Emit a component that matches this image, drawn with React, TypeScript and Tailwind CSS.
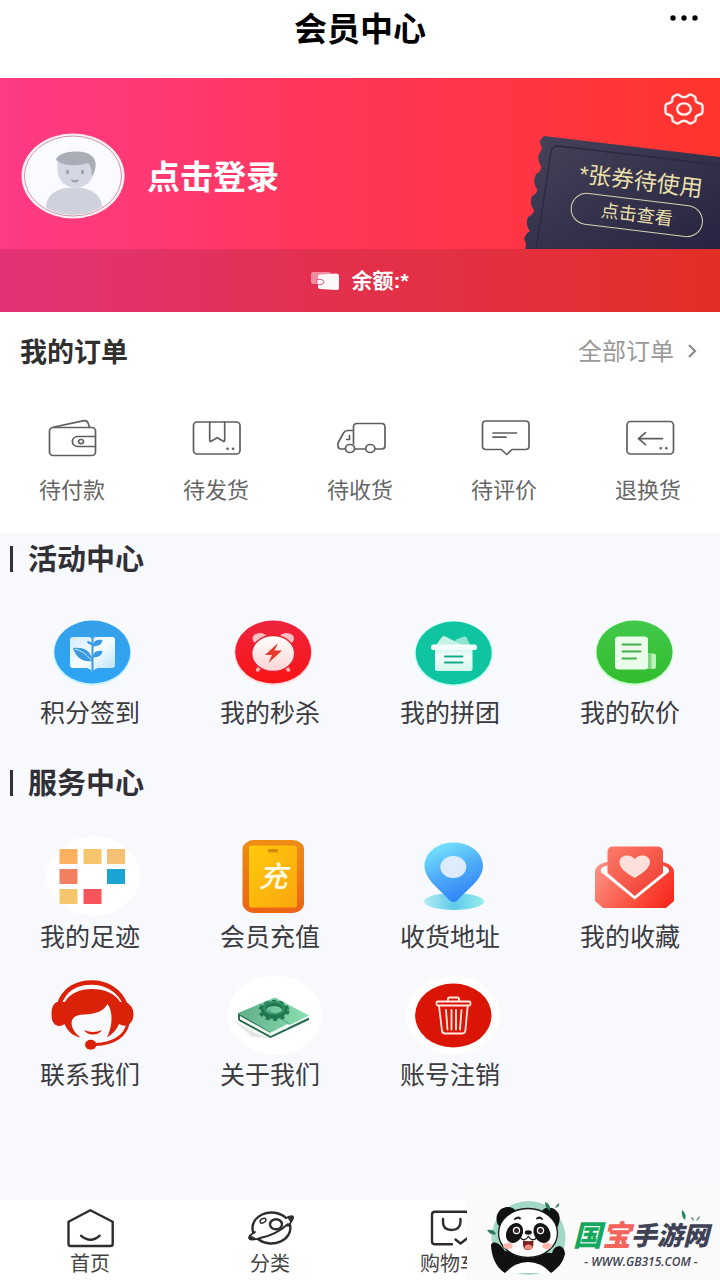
import React from 'react';

interface MenuItem {
  label: string;
  icon: React.ReactNode;
}

const iconFont = '"Liberation Sans", "Noto Sans CJK SC", sans-serif';

const Avatar = () => (
  <svg className="w-[104px] h-[86px] shrink-0" viewBox="0 0 104 86" aria-hidden="true">
    <defs>
      <clipPath id="avatarClip"><ellipse cx="52" cy="43" rx="47" ry="39" /></clipPath>
    </defs>
    <ellipse cx="52" cy="43" rx="51.5" ry="42.5" fill="#fdf1f5" />
    <ellipse cx="52" cy="43" rx="48.5" ry="40" fill="#fafbfe" stroke="#c9788f" strokeWidth="0.8" />
    <g clipPath="url(#avatarClip)">
      <path d="M25 86V72C27 61 36 56 46 55H60C71 56 79 62 81 72V86Z" fill="#cfd1dc" />
      <path d="M36.500 29H73V37C72 48 64 55 54.500 55S37 48 36.500 37Z" fill="#d5d8e4" />
      <path d="M35 27C36 21 46 18.500 56 18.500C68 18.500 76 24 74.500 34C74 39 72 42 70.500 43C71 38 70 33 67 30C58 33 43 34 35 27Z" fill="#a9adb5" />
      <ellipse cx="46.500" cy="39" rx="1.500" ry="2.200" fill="#9a9fae" />
      <ellipse cx="61.500" cy="39" rx="1.500" ry="2.200" fill="#9a9fae" />
      <path d="M49.500 46.500Q54 48 58 46.500Q57 49.500 54 49.500T49.500 46.500Z" fill="#979cab" />
    </g>
  </svg>
);

const GearIcon = () => (
  <svg className="w-10 h-8" viewBox="0 0 40 32" fill="none" stroke="#fff0ee" strokeWidth="2.400" strokeLinejoin="round" aria-hidden="true">
    <path d="M12 2Q14 1 15.500 2.300C17.500 4 18.500 4.300 20 4.300S22.500 4 24.500 2.300Q26 1 28 2L30.500 3.500Q31.800 4.500 31.600 6C31.400 8.500 32.500 9.800 36 10.500Q38.500 11 38.500 13.500V18.500Q38.500 21 36 21.500C32.500 22.200 31.400 23.500 31.600 26Q31.800 27.500 30.500 28.500L28 30Q26 31 24.500 29.700C22.500 28 21.500 27.700 20 27.700S17.500 28 15.500 29.700Q14 31 12 30L9.500 28.500Q8.200 27.500 8.400 26C8.600 23.500 7.500 22.200 4 21.500Q1.500 21 1.500 18.500V13.500Q1.500 11 4 10.500C7.500 9.800 8.600 8.500 8.400 6Q8.200 4.500 9.500 3.500Z" />
    <ellipse cx="20" cy="16" rx="6.800" ry="5.600" />
  </svg>
);

const TicketShape = () => (
  <svg className="absolute inset-0 w-full h-full" viewBox="0 0 197 114" aria-hidden="true">
    <defs>
      <linearGradient id="ticket" x1="0" y1="0" x2="1" y2="1">
        <stop offset="0" stopColor="#46435a" />
        <stop offset="1" stopColor="#25233f" />
      </linearGradient>
    </defs>
    <path d="M21 1L197 22V114H2Q4 109 1 104Q3 98 7 96Q2 90 5 82Q11 79 11 75Q6 69 9 61Q15 58 14 54Q9 47 13 39Q19 36 18 31Q13 24 17 17Q20 14 18 11Q15 5 21 1Z" fill="url(#ticket)" />
    <path d="M13 114L28 17Q29 11 35 11L197 30" fill="none" stroke="#2b2940" strokeWidth="1.300" />
  </svg>
);

const BalanceIcon = () => (
  <svg className="w-7 h-5" viewBox="0 0 28 20" aria-hidden="true">
    <path d="M2 1H18Q20 1 20 3V13H2Q0 13 0 11V3Q0 1 2 1Z" fill="#f58ba0" />
    <path d="M9 3.500L25 2.500Q28 2.500 28 5V17Q28 19 25 19L9 18Q7 18 7 16V5Q7 3.500 9 3.500Z" fill="#fff8f8" />
    <path d="M6 8.500H10Q13 9 13 11T10 13.500H6Z" fill="#fff8f8" stroke="#d7557b" strokeWidth="0.900" />
  </svg>
);

const OrderIcon = ({ children }: { children: React.ReactNode }) => (
  <svg className="w-14 h-11" viewBox="0 0 56 44" fill="none" stroke="#5f5f5f" strokeWidth="1.700" strokeLinecap="round" strokeLinejoin="round" aria-hidden="true">
    {children}
  </svg>
);

const orders: MenuItem[] = [
  {
    label: '待付款',
    icon: (
      <OrderIcon>
        <rect x="5.500" y="11.500" width="46" height="28" rx="3.500" />
        <path d="M10 11L39 4.800Q43 4 44.300 7.500L45.500 11.500M51.500 20.500H34C26.500 20.500 26.500 30.500 34 30.500H51.500" />
        <ellipse cx="37" cy="25.600" rx="2.500" ry="2.100" />
      </OrderIcon>
    )
  },
  {
    label: '待发货',
    icon: (
      <OrderIcon>
        <rect x="5.500" y="6" width="46.500" height="32" rx="3.500" />
        <path d="M21.700 6V24.500Q22 26 23.500 25L29.200 21.700L35 25Q36.500 26 36.700 24.500V6" />
        <path d="M39.500 32.700H39.600M45 32.700H45.100" strokeWidth="2.600" />
      </OrderIcon>
    )
  },
  {
    label: '待收货',
    icon: (
      <OrderIcon>
        <path d="M13.500 33H9Q6 33 6 30V27L11.500 17Q13 14.500 15.500 14.500H21.500M22.500 33H33.500M43 33H49.500Q53 33 53 30V11Q53 7.500 49.500 7.500H25Q21.500 7.500 21.500 11V28M17.500 19.500V23.500H14.500" />
        <ellipse cx="18" cy="32.500" rx="4.600" ry="4" />
        <ellipse cx="38.300" cy="32.500" rx="4.600" ry="4" />
      </OrderIcon>
    )
  },
  {
    label: '待评价',
    icon: (
      <OrderIcon>
        <path d="M10 5H49.500Q53 5 53 8.500V30Q53 33.500 49.500 33.500H36L30.700 38.500L25.300 33.500H10Q6.500 33.500 6.500 30V8.500Q6.500 5 10 5ZM17 17H40.500M17 21.200H30" />
      </OrderIcon>
    )
  },
  {
    label: '退换货',
    icon: (
      <OrderIcon>
        <rect x="7" y="5.500" width="46.500" height="32.500" rx="3.500" />
        <path d="M42.500 22.700H18.500M25.500 16.700L18.500 22.700L25.500 28.700" />
        <path d="M40.700 32.300H40.800M46.300 32.300H46.400" strokeWidth="2.600" />
      </OrderIcon>
    )
  }
];

const TileIcon = ({ children }: { children: React.ReactNode }) => (
  <svg className="w-24 h-20 overflow-visible" viewBox="0 0 96 80" aria-hidden="true">{children}</svg>
);

const activities: MenuItem[] = [
  {
    label: '积分签到',
    icon: (
      <TileIcon>
        <defs>
          <linearGradient id="blueDisc" x1="0" y1="0" x2="0" y2="1">
            <stop offset="0" stopColor="#35a0e8" /><stop offset="1" stopColor="#2ea4f5" />
          </linearGradient>
          <linearGradient id="page" x1="0" y1="0" x2="1" y2="1">
            <stop offset="0" stopColor="#d2ebfc" /><stop offset="0.500" stopColor="#f8fdff" /><stop offset="1" stopColor="#b9e0fb" />
          </linearGradient>
        </defs>
        <ellipse cx="50.300" cy="42" rx="39" ry="32.500" fill="#c9f3ff" />
        <ellipse cx="50.300" cy="41" rx="38" ry="31.500" fill="url(#blueDisc)" />
        <path d="M31 26H46Q50 26 50.500 29Q51 26 55 26H70Q73 26 73 29V54Q73 57 70 57H56Q53 57.500 50.500 60.500Q48 57.500 45 57H31Q28 57 28 54V29Q28 26 31 26Z" fill="url(#page)" />
        <g fill="#3b9be0">
          <path d="M49.500 27H51.500V60H49.500Z" />
          <path d="M31 37Q43 36 47.500 42Q50 45 50 50Q36 52 31 37Z" />
          <path d="M51 34Q52 28 60.500 29Q60 35 51 35.500ZM51 45Q52 39 60.500 40Q60 46 51 46.500Z" />
          <path d="M49.500 34Q45 33 45 30Q49 30 50.500 33Z" />
        </g>
        <path d="M33 38Q42 40 49 49" stroke="#d6effd" strokeWidth="0.900" fill="none" />
      </TileIcon>
    )
  },
  {
    label: '我的秒杀',
    icon: (
      <TileIcon>
        <defs>
          <linearGradient id="redDisc" x1="0" y1="0" x2="0" y2="1">
            <stop offset="0" stopColor="#ef2440" /><stop offset="1" stopColor="#f81414" />
          </linearGradient>
          <linearGradient id="clockFace" x1="0" y1="0" x2="0" y2="1">
            <stop offset="0" stopColor="#ffffff" /><stop offset="1" stopColor="#fcd4d4" />
          </linearGradient>
        </defs>
        <ellipse cx="51.200" cy="42" rx="39" ry="32.500" fill="#ffdcdf" />
        <ellipse cx="51.200" cy="41" rx="38" ry="31.500" fill="url(#redDisc)" />
        <ellipse cx="38" cy="27.500" rx="7.500" ry="5.500" fill="#fbc0c4" />
        <ellipse cx="64.500" cy="27.500" rx="7.500" ry="5.500" fill="#fbc0c4" />
        <path d="M39 55L35.500 59M63 55L66.500 59" stroke="#fbb4b4" strokeWidth="3.500" strokeLinecap="round" />
        <ellipse cx="51.200" cy="42.500" rx="21.500" ry="18" fill="url(#clockFace)" stroke="#e82231" strokeWidth="1.500" />
        <path d="M56 32L43 44H50L46.500 52L60 39.500H52.500Z" fill="#e83a2c" />
      </TileIcon>
    )
  },
  {
    label: '我的拼团',
    icon: (
      <TileIcon>
        <defs>
          <linearGradient id="parcel" x1="0" y1="0" x2="0" y2="1">
            <stop offset="0" stopColor="#c9f3e8" /><stop offset="0.350" stopColor="#f6fffc" /><stop offset="1" stopColor="#d2f7ec" />
          </linearGradient>
        </defs>
        <ellipse cx="51.700" cy="42.500" rx="39" ry="32.500" fill="#b9fff2" />
        <ellipse cx="51.700" cy="42" rx="38" ry="31.500" fill="#0fc4a0" />
        <path d="M53 29L62 25.500Q64 25 65 27L68 34H54Z" fill="#8fe3d0" />
        <path d="M34 34L40 26Q41.500 24.500 43.500 25.500L59 33.500V35H34Z" fill="#c6f2e6" />
        <path d="M33 37H70.500V57.500Q70.500 60 68 60H35.500Q33 60 33 57.500Z" fill="url(#parcel)" />
        <rect x="29" y="33.500" width="46" height="5.500" rx="2.500" fill="#f3fffb" />
        <path d="M43 45.500H60.500M43 51.500H60.500" stroke="#12ac87" strokeWidth="2" strokeLinecap="round" />
      </TileIcon>
    )
  },
  {
    label: '我的砍价',
    icon: (
      <TileIcon>
        <defs>
          <linearGradient id="greenDisc" x1="0" y1="0" x2="0" y2="1">
            <stop offset="0" stopColor="#43c84b" /><stop offset="1" stopColor="#31bd2e" />
          </linearGradient>
        </defs>
        <ellipse cx="52.500" cy="42" rx="39" ry="32.500" fill="#c8ffcc" />
        <ellipse cx="52.500" cy="41" rx="38" ry="31.500" fill="url(#greenDisc)" />
        <rect x="63" y="42.500" width="11" height="15.500" rx="2.500" fill="#bdf0bd" />
        <rect x="65.500" y="43" width="4" height="15" fill="#7fd582" />
        <rect x="33" y="25.500" width="33" height="33" rx="3.500" fill="#ecfcea" />
        <path d="M40.500 33.500H58.500M40.500 40.500H58.500M40.500 47.500H54" stroke="#45b04a" strokeWidth="2" strokeLinecap="round" />
      </TileIcon>
    )
  }
];

const services: MenuItem[] = [
  {
    label: '我的足迹',
    icon: (
      <TileIcon>
        <ellipse cx="51.300" cy="41" rx="47" ry="39.500" fill="#ffffff" />
        <rect x="17.500" y="14" width="18" height="15" fill="#fbb05d" />
        <rect x="41.500" y="14" width="18" height="15" fill="#f4c56c" />
        <rect x="65" y="14" width="18" height="15" fill="#f4c073" />
        <rect x="17.500" y="34" width="18" height="15" fill="#f08060" />
        <rect x="65" y="34" width="18" height="15" fill="#1ba4d2" />
        <rect x="17.500" y="54" width="18" height="15" fill="#f4c56c" />
        <rect x="41.500" y="54" width="18" height="15" fill="#f7545c" />
      </TileIcon>
    )
  },
  {
    label: '会员充值',
    icon: (
      <TileIcon>
        <defs>
          <linearGradient id="cardEdge" x1="0" y1="0" x2="0" y2="1">
            <stop offset="0" stopColor="#ee8d14" /><stop offset="1" stopColor="#ec6416" />
          </linearGradient>
          <linearGradient id="cardFace" x1="0" y1="0" x2="1" y2="1">
            <stop offset="0" stopColor="#ffca0c" /><stop offset="1" stopColor="#fba60d" />
          </linearGradient>
        </defs>
        <path d="M31 5H71Q75 5 79 8Q82 10 82 14V69Q82 72 79 75Q75 78 71 78H31Q27 78 24 75Q20.500 72 20.500 69V14Q20.500 10 24 8Q27 5 31 5Z" fill="url(#cardEdge)" />
        <rect x="27" y="10.500" width="48" height="62" rx="2.500" fill="url(#cardFace)" />
        <rect x="46" y="14" width="10" height="3.500" rx="1" fill="#d58a0b" />
        <text x="51" y="52" textAnchor="middle" fontSize="29" fontWeight="500" fontStyle="italic" fill="#fffbe9" style={{ fontFamily: iconFont }}>充</text>
      </TileIcon>
    )
  },
  {
    label: '收货地址',
    icon: (
      <TileIcon>
        <defs>
          <linearGradient id="pin" x1="0.200" y1="0" x2="0.600" y2="1">
            <stop offset="0" stopColor="#79e8fb" /><stop offset="0.500" stopColor="#4fadf7" /><stop offset="1" stopColor="#2f82f5" />
          </linearGradient>
          <linearGradient id="pinShade" x1="0" y1="0" x2="1" y2="0">
            <stop offset="0" stopColor="#b5eaf5" /><stop offset="0.500" stopColor="#5ecbea" /><stop offset="1" stopColor="#97eeec" />
          </linearGradient>
        </defs>
        <ellipse cx="52" cy="66.500" rx="30" ry="8.500" fill="url(#pinShade)" />
        <path d="M51.500 7.500C68 7.500 81 18 81 31C81 45 64 55 56 65Q51.500 69 47 65C39 55 22.500 45 22.500 31C22.500 18 35 7.500 51.500 7.500Z" fill="url(#pin)" />
        <ellipse cx="51.300" cy="32" rx="13" ry="11" fill="#dcecfc" />
      </TileIcon>
    )
  },
  {
    label: '我的收藏',
    icon: (
      <TileIcon>
        <defs>
          <linearGradient id="envelope" x1="0" y1="0.300" x2="1" y2="0.700">
            <stop offset="0" stopColor="#fb8d80" /><stop offset="0.600" stopColor="#fb503f" /><stop offset="1" stopColor="#f62a1f" />
          </linearGradient>
          <linearGradient id="letter" x1="0" y1="0" x2="1" y2="1">
            <stop offset="0" stopColor="#fb7b6a" /><stop offset="1" stopColor="#f03a2e" />
          </linearGradient>
        </defs>
        <path d="M24 27Q13 30 13 37V66L21 73H84L92 66V37Q92 30 81 27Z" fill="url(#envelope)" />
        <path d="M27 30Q17 32 19 37L52.700 64.500L87 37Q88 32 79 30Z" fill="#ffffff" />
        <path d="M31 11.500H75Q81 11.500 81 17V38L52.700 61L25.500 38V17Q25.500 11.500 31 11.500Z" fill="url(#letter)" />
        <path d="M52.700 43C44 38 37.500 33 37.500 27C37.500 20 47.500 18 52.700 24C58 18 68 20 68 27C68 33 61 38 52.700 43Z" fill="#fde0dc" />
      </TileIcon>
    )
  },
  {
    label: '联系我们',
    icon: (
      <TileIcon>
        <g fill="none" stroke="#d92208">
          <path d="M17 32C22 16 35 9.500 49.500 9.500S78 17 83.500 32" strokeWidth="4.600" />
          <path d="M86 50C84 62 73 71 53 71.500" strokeWidth="3" />
        </g>
        <path d="M23 29H15Q9.500 31 9.500 41T15 52.500Q19 54 22.500 51C25 57 30 63 38.500 64.500C33 60 30 56 29.500 50C30 44 34 42 42 41.500C53 41 61 39 65.500 31C71 38 71 52 65 64.500C71 61 75 56 77 51Q82 54 86 52Q91.500 49 91.500 41T84 29H78C73 20 62 16 50 16S28 20 23 29Z" fill="#d92208" />
        <path d="M42 57Q51 61 60 57Q57 61.500 51 61.500T42 57Z" fill="#d92208" />
        <ellipse cx="48.700" cy="71.700" rx="5.700" ry="5" fill="#d92208" />
      </TileIcon>
    )
  },
  {
    label: '关于我们',
    icon: (
      <TileIcon>
        <defs>
          <linearGradient id="cover" x1="0" y1="0" x2="1" y2="0">
            <stop offset="0" stopColor="#5fae8a" /><stop offset="1" stopColor="#8be0b0" />
          </linearGradient>
        </defs>
        <ellipse cx="53" cy="42" rx="47" ry="39.500" fill="#fefffe" />
        <path d="M11 47L36 61L48 65L30 64Z" fill="#e3e8e4" />
        <path d="M16 40L48.500 58V65L16 47Z" fill="#2f7257" />
        <path d="M18 43L48.500 60L64 53Q65 49 67 53L86 44.500V47L49 64L18 46.500Z" fill="#f1f8f2" />
        <path d="M17 48L48.700 65L87 47V44.500L67 54Q64 56 62 56.500L48.700 63L17 46Z" fill="#2b6e53" />
        <path d="M16 40L35 32L53 24.500L87 42.500L68 52Q65 50 62 53L48.700 59.500Z" fill="url(#cover)" />
        <path d="M37 31L67 51" stroke="#4c9c77" strokeWidth="1" />
        <ellipse cx="52" cy="37" rx="10.500" ry="6.500" fill="none" stroke="#1e7750" strokeWidth="5" />
        <ellipse cx="52" cy="37.500" rx="14" ry="9" fill="none" stroke="#1e7750" strokeWidth="3" strokeDasharray="4 3.500" />
        <ellipse cx="52" cy="35" rx="10" ry="6" fill="none" stroke="#399569" strokeWidth="1.500" />
      </TileIcon>
    )
  },
  {
    label: '账号注销',
    icon: (
      <TileIcon>
        <ellipse cx="51.300" cy="42" rx="47" ry="39.500" fill="#fffefd" />
        <ellipse cx="51.300" cy="42.500" rx="38.200" ry="32" fill="#da1505" />
        <g fill="none" stroke="#ffe9e3" strokeWidth="1.800" strokeLinejoin="round" strokeLinecap="round">
          <rect x="34.500" y="28.500" width="34" height="4" rx="1.500" />
          <path d="M46 28V26Q46 24.500 48 24.500H55Q57 24.500 57 26V28M37 33L40 58Q40.500 60.500 43 60.500H60Q63 60.500 63.300 58L65.700 33M44 37L45.500 56.500M49.500 37V56.500M54 37V56.500M59.500 37L58 56.500" />
        </g>
      </TileIcon>
    )
  }
];

const TabIcon = ({ children }: { children: React.ReactNode }) => (
  <svg className="w-[52px] h-10" viewBox="0 0 52 40" fill="none" stroke="#2d2d2d" strokeWidth="2.400" strokeLinecap="round" strokeLinejoin="round" aria-hidden="true">
    {children}
  </svg>
);

const tabs: MenuItem[] = [
  {
    label: '首页',
    icon: (
      <TabIcon>
        <path d="M4.500 13.800L26.300 2.300L48.700 13.800V36Q48.700 38 46.500 38H6.700Q4.500 38 4.500 36ZM17 27.700Q26.500 36 35.700 27.700" />
      </TabIcon>
    )
  },
  {
    label: '分类',
    icon: (
      <TabIcon>
        <path d="M9.500 25A19 15.500 0 0 1 42 10M46 17A19 15.500 0 0 1 14 31" />
        <path d="M42 10Q48 7 49 9T44 18M11 24Q4 28 5.500 30.500T16 30Q32 27 44 16" strokeWidth="1.800" />
        <path d="M44 9L49 8.500L47 14ZM5.500 27.500L5 31L12 31Z" fill="#2d2d2d" strokeWidth="1" />
        <ellipse cx="32" cy="16.300" rx="6" ry="5" />
        <ellipse cx="19" cy="12.700" rx="3.200" ry="2" transform="rotate(-30 19 12.700)" strokeWidth="1.400" />
      </TabIcon>
    )
  },
  {
    label: '购物车',
    icon: (
      <TabIcon>
        <path d="M28 36.300H11Q8 36.300 8 33.500V6.500Q8 3.800 11 3.800H42Q45 3.800 45 6.500V27M19 11V14Q19 22 27.500 22T36.500 14V11M31.500 31.500L36.500 35.500L43 30.500" />
      </TabIcon>
    )
  }
];

const PandaLogo = () => (
  <svg className="w-[88px] h-20 shrink-0" viewBox="0 0 88 80" aria-hidden="true">
    <circle cx="43.500" cy="40" r="37" fill="#a3d8c4" />
    <path d="M13 27C9 18 14 9 23 9Q28 9 31 13L17 30ZM57 13Q60 8 67 10C75 13 77 21 72 30Z" fill="#111" />
    <path d="M6 48Q6 44 10 44.500Q16 46 20 53L67 55Q69 48 75 48Q80 50 80 56C78 65 72 71 66 75H20C12 70 7 61 6 48Z" fill="#111" />
    <path d="M20 75Q30 64 43 64T66 75Z" fill="#fff" />
    <ellipse cx="43" cy="35" rx="29.500" ry="24.500" fill="#fff" stroke="#161616" strokeWidth="1.300" />
    <ellipse cx="29.500" cy="35" rx="8" ry="10.500" transform="rotate(28 29.500 35)" fill="#141414" />
    <ellipse cx="57" cy="35" rx="8" ry="10.500" transform="rotate(-28 57 35)" fill="#141414" />
    <circle cx="31.500" cy="32.500" r="3.700" fill="#fff" /><circle cx="31.500" cy="32.500" r="2.500" fill="#382a28" />
    <circle cx="55.500" cy="32.500" r="3.700" fill="#fff" /><circle cx="55.500" cy="32.500" r="2.500" fill="#382a28" />
    <path d="M30 21Q33 18.500 35 20.500M52 20.500Q55 18.500 57 21" stroke="#222" strokeWidth="2" strokeLinecap="round" fill="none" />
    <ellipse cx="43.300" cy="34.500" rx="3.500" ry="2.200" fill="#161616" />
    <path d="M35.500 40Q40 44 43.300 38.500Q47 44 51.500 40" stroke="#161616" strokeWidth="1.200" fill="none" />
    <path d="M38 42.500Q43 44 48.500 42.500Q49 52 43 52T38 42.500Z" fill="#7c2020" />
    <ellipse cx="43.300" cy="49" rx="3.600" ry="2.600" fill="#f58b82" />
    <ellipse cx="23" cy="48" rx="4.800" ry="3" fill="#fbb5ad" />
    <ellipse cx="62" cy="48" rx="4.800" ry="3" fill="#fbb5ad" />
    <path d="M60 4Q66 6 65 13Q60 10 60 4ZM70 10Q71 7 74 5Q75 9 70 10ZM2 32Q9 31 11 36Q6 38 2 32Z" fill="#2b7d5c" />
  </svg>
);

const SiteBadge = () => (
  <a href="#site" className="fixed right-0 bottom-0 z-10 flex h-24 w-[253px] items-end bg-[#fafafa] pb-0.5 pl-[18px]">
    <PandaLogo />
    <span className="relative flex flex-col items-center pb-2 italic">
      <span className="flex items-center whitespace-nowrap text-[26px] leading-9 font-black text-[#3f4254]">
        <span className="text-[29px] text-[#14a85e]">国</span>
        <span className="text-[29px] text-[#f4645c]">宝</span>
        手游网
      </span>
      <span className="whitespace-nowrap font-['Open_Sans',sans-serif] text-xs leading-4 font-semibold text-[#3f4254]">- WWW.GB315.COM -</span>
      <svg className="absolute -top-2 right-1 h-3 w-6" viewBox="0 0 24 12" aria-hidden="true">
        <path d="M1 0Q6 4 4 10Q0 7 1 0Z" fill="#21855c" />
        <path d="M10 7Q13 7 13 11Q10 10 10 7ZM15 11Q16 7 19 6Q19 10 15 11Z" fill="#7d9f91" />
      </svg>
    </span>
  </a>
);

const MenuSection = ({ title, items }: { title: string; items: MenuItem[] }) => (
  <section className="pb-[22px]">
    <h2 className="flex h-[52px] items-center gap-[15px] pl-[10px] text-[29px] font-bold text-[#303036]">
      <span className="h-[26px] w-[3px] bg-[#303036]"></span>
      <span className="pt-1">{title}</span>
    </h2>
    <div className="mt-[26px] grid grid-cols-4 gap-y-[14px]">
      {items.map(item => (
        <button key={item.label} className="flex flex-col items-center">
          {item.icon}
          <span className="text-[25px] leading-[44px] whitespace-nowrap text-[#3b3b3f]">{item.label}</span>
        </button>
      ))}
    </div>
  </section>
);

const App: React.FC = () => {
  return (
    <div className="flex min-h-screen w-full flex-col bg-white font-['Liberation_Sans','Noto_Sans_CJK_SC',sans-serif]">
      <header className="grid h-[78px] grid-cols-3 items-start px-4 pt-2">
        <h1 className="col-start-2 pt-0.5 text-center text-[33px] leading-10 font-bold whitespace-nowrap text-black">会员中心</h1>
        <button className="justify-self-end pt-1" aria-label="更多">
          <svg className="h-3 w-9" viewBox="0 0 36 12" aria-hidden="true">
            <circle cx="5" cy="6" r="2.700" /><circle cx="16" cy="6" r="2.700" /><circle cx="27" cy="6" r="2.700" />
          </svg>
        </button>
      </header>

      <section className="bg-gradient-to-r from-[#ff3a86] via-[#ff3654] to-[#ff342a]">
        <div className="flex justify-between">
          <button className="flex items-center gap-[22px] self-end pb-[30px] pl-[21px]">
            <Avatar />
            <span className="pt-1 text-[33px] leading-10 font-bold whitespace-nowrap text-white">点击登录</span>
          </button>
          <div className="flex flex-col items-end">
            <button className="mt-[15px] mr-4" aria-label="设置"><GearIcon /></button>
            <button className="relative mt-[10px] h-[114px] w-[197px]">
              <TicketShape />
              <span className="relative flex rotate-7 flex-col items-center gap-0.5 pt-2 pl-[36px] text-[#e8dfa9]">
                <span className="text-[23px] leading-8 whitespace-nowrap">*张券待使用</span>
                <span className="flex h-8 w-[133px] items-center justify-center rounded-full border border-[#d8d2b0] text-lg">点击查看</span>
              </span>
            </button>
          </div>
        </div>
        <div className="flex h-[63px] items-center justify-center gap-3 bg-black/11">
          <BalanceIcon />
          <span className="text-[21px] leading-8 font-bold text-white">余额:*</span>
        </div>
      </section>

      <section className="bg-white">
        <div className="flex h-20 items-center justify-between pr-[22px] pl-5">
          <h2 className="pt-0.5 text-[27px] font-bold text-[#303030]">我的订单</h2>
          <a href="#orders" className="flex items-center gap-3 text-2xl text-[#999999]">
            全部订单
            <svg className="h-4 w-3" viewBox="0 0 12 16" fill="none" stroke="#8b8b8b" strokeWidth="2.200" aria-hidden="true"><path d="M3 1L9 7L3 13" /></svg>
          </a>
        </div>
        <div className="grid grid-cols-5 pt-6 pb-[26px]">
          {orders.map(item => (
            <button key={item.label} className="flex flex-col items-center gap-[15px]">
              {item.icon}
              <span className="text-[22px] leading-8 whitespace-nowrap text-[#666666]">{item.label}</span>
            </button>
          ))}
        </div>
      </section>

      <main className="flex-1 bg-[#f8f9fd]">
        <MenuSection title="活动中心" items={activities} />
        <MenuSection title="服务中心" items={services} />
      </main>

      <nav className="grid h-20 grid-cols-4 bg-white pt-2">
        {tabs.map(item => (
          <button key={item.label} className="flex flex-col items-center">
            {item.icon}
            <span className="text-xl leading-8 whitespace-nowrap text-[#444444]">{item.label}</span>
          </button>
        ))}
      </nav>
      <SiteBadge />
    </div>
  );
};

export default App;
